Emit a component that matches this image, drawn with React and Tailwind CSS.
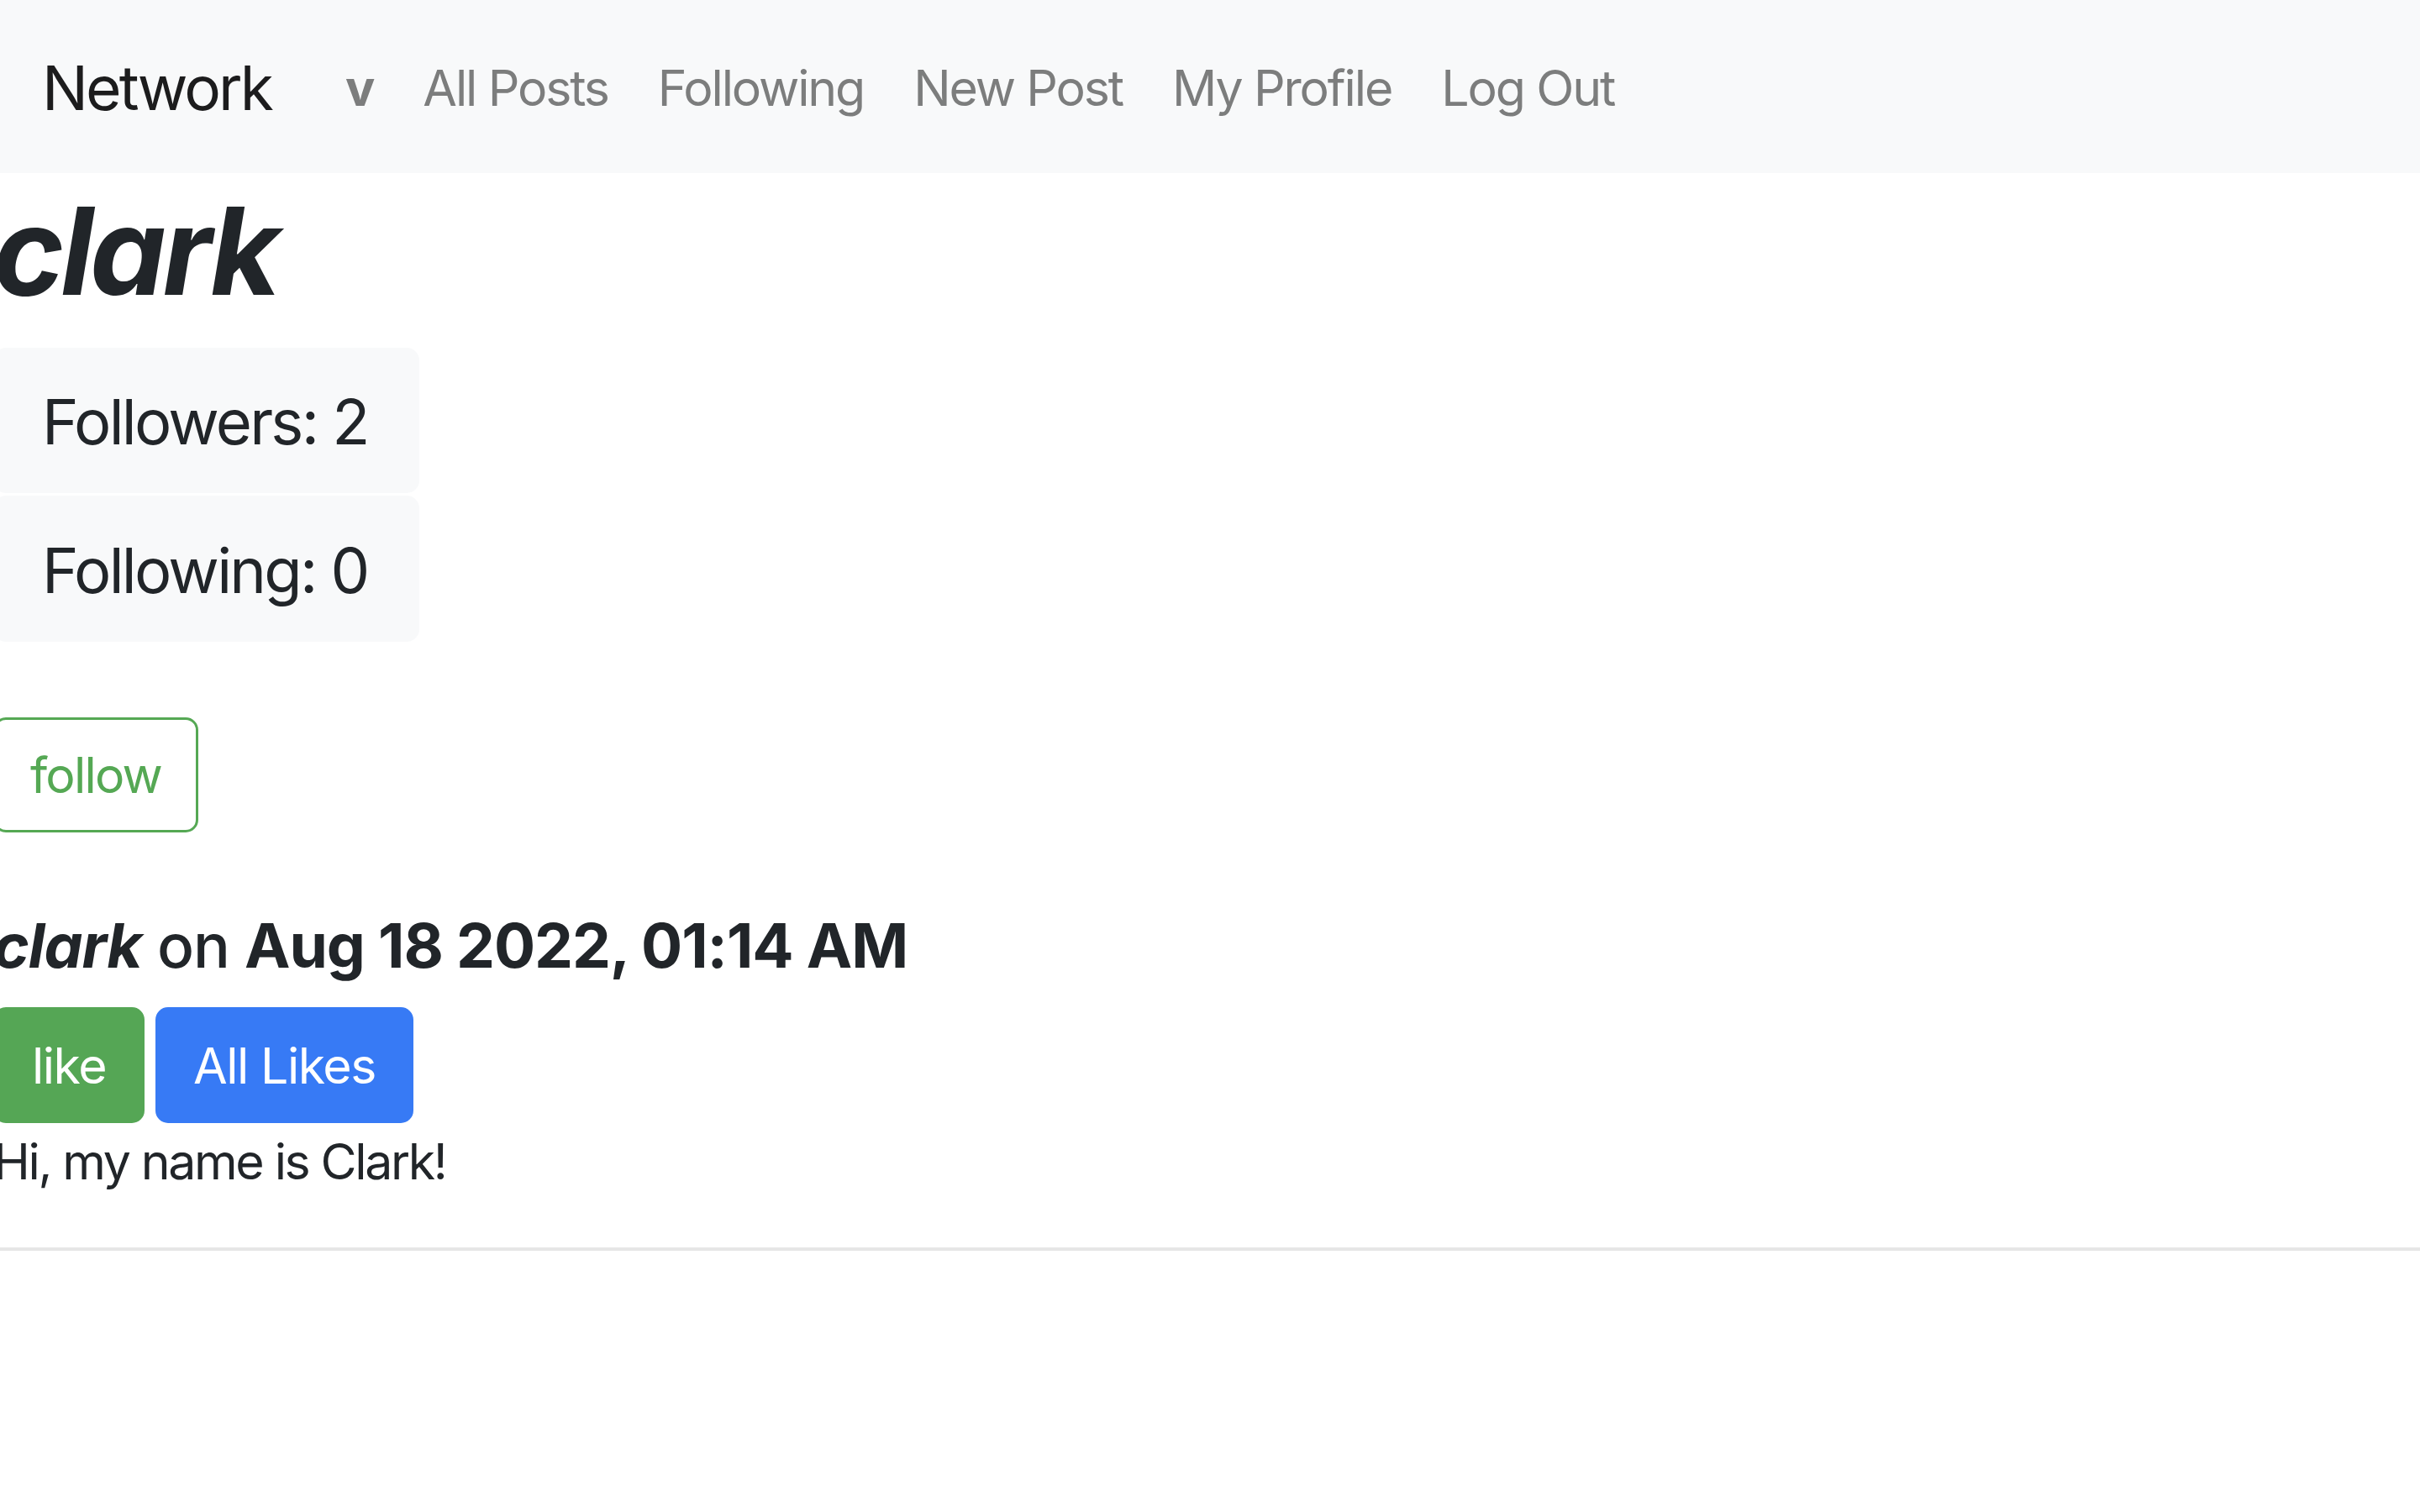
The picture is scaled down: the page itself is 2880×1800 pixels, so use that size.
export default function App() {
  const links = ["All Posts", "Following", "New Post", "My Profile", "Log Out"];

  return (
    <div className="min-h-screen bg-white text-[#212529] font-['Inter',sans-serif]">
      <nav className="flex h-[206px] items-center bg-[#f8f9fa] pl-[50px] pt-[3px]">
        <span className="mr-[88px] text-[73px] leading-none tracking-[-0.04em] text-[#1c1c1d]">Network</span>
        <span className="mr-[57px] text-[59px] font-bold leading-none text-[#7c7d7d]">v</span>
        <div className="flex items-center gap-[59px]">
          {links.map((label) => (
            <a key={label} href="#" className="text-[59px] leading-none tracking-[-0.036em] text-[#7c7d7d]">
              {label}
            </a>
          ))}
        </div>
      </nav>

      <main className="-ml-2">
        <h1 className="mt-[21px] text-[144px] font-bold italic leading-none tracking-[-0.03em]">clark</h1>

        <div className="mt-[43px] flex w-[507px] flex-col gap-[3px] text-[74px] leading-none tracking-[-0.037em]">
          <div className="flex h-[173px] items-center rounded-[15px] bg-[#f8f9fa] pl-[58px] pt-[3px]">
            Followers: 2
          </div>
          <div className="flex h-[174px] items-center rounded-[15px] bg-[#f8f9fa] pl-[58px] pt-[3px]">
            Following: 0
          </div>
        </div>

        <button className="mt-[90px] flex h-[137px] w-[244px] items-center justify-center rounded-[15px] border-[3px] border-[#55a854] text-[59px] leading-none tracking-[-0.03em] text-[#55a854]">
          follow
        </button>

        <div className="mt-[98px]">
          <h5 className="text-[73px] font-medium leading-none tracking-[-0.015em]">
            <b className="font-bold italic">clark</b> on <b className="font-bold">Aug 18 2022, 01:14 AM</b>
          </h5>
          <div className="mt-[37px] flex gap-[13px] text-[59px] leading-none tracking-[-0.025em] text-white">
            <button className="flex h-[138px] w-[180px] items-center justify-center rounded-[15px] bg-[#55a655]">
              like
            </button>
            <button className="flex h-[138px] w-[307px] items-center justify-center rounded-[15px] bg-[#377af5]">
              All Likes
            </button>
          </div>
          <p className="mt-[16px] text-[59px] leading-none tracking-[-0.04em]">Hi, my name is Clark!</p>
          <hr className="mt-[73px] border-t-4 border-[#e6e6e6]" />
        </div>
      </main>
    </div>
  );
}
